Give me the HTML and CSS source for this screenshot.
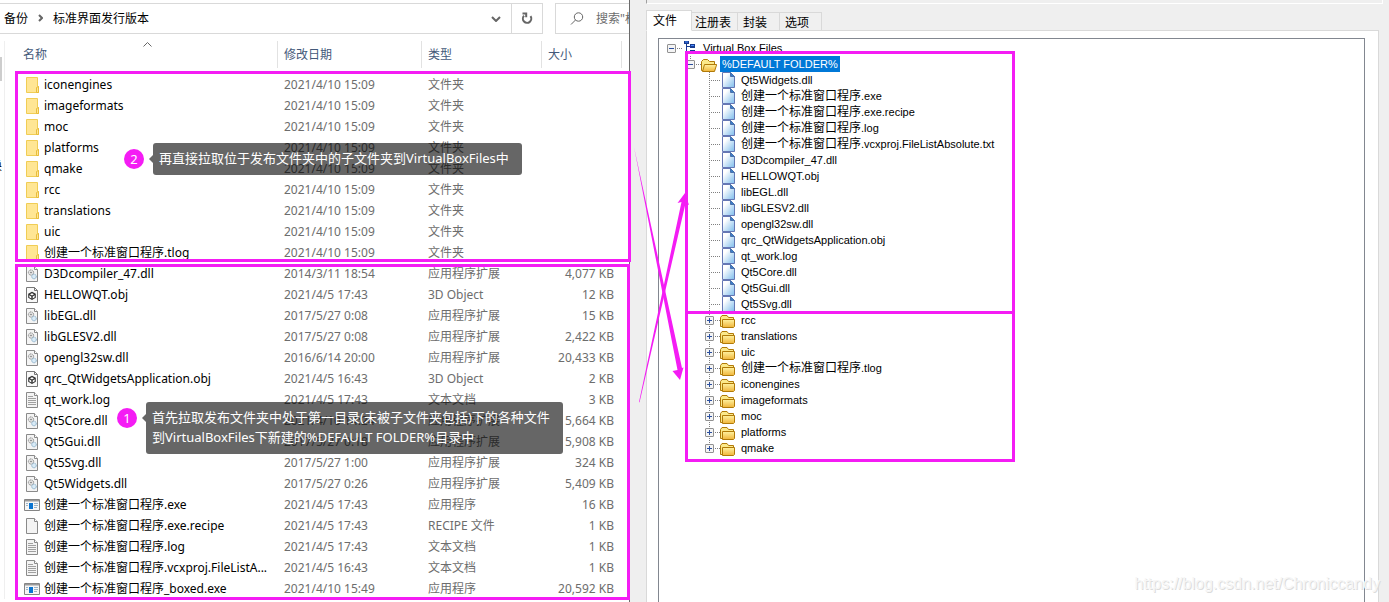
FILE: index.html
```
<!DOCTYPE html>
<html lang="zh-CN">
<head>
  <meta charset="UTF-8" />
  <meta name="viewport" content="width=device-width, initial-scale=1.0" />
  <title>标准界面发行版本</title>
  <link rel="stylesheet" href="styles.css">
</head>
<body>
  <svg class="sprite" aria-hidden="true">
    <symbol id="i-folder" viewBox="0 0 16 16">
      <path d="M2.500.5h11v9h1v6h-12z" fill="#ffe694" stroke="#f0cd55"/>
      <path d="M12.500 15.500v-5l2-1v6z" fill="#ffe694" stroke="#e8bd3c"/>
    </symbol>
    <symbol id="i-page" viewBox="0 0 16 16">
      <path d="M2.500.5h8l3 3v12h-11z" fill="#f4f4f4" stroke="#8a8a8a"/>
      <path d="M10.500.5v3h3" fill="#fff" stroke="#8a8a8a"/>
    </symbol>
    <symbol id="i-text" viewBox="0 0 16 16">
      <use href="#i-page"/>
      <path d="M4 4.500h5M4 6.500h8M4 8.500h8M4 10.500h8M4 12.500h8" stroke="#a0a0a0"/>
    </symbol>
    <symbol id="i-dll" viewBox="0 0 16 16">
      <use href="#i-page"/>
      <circle cx="7" cy="6.500" r="2.600" fill="#e4e4e4" stroke="#858585" stroke-dasharray="1.200 .6"/>
      <circle cx="7" cy="6.500" r=".8" fill="#777"/>
      <circle cx="10" cy="10.500" r="2.300" fill="#d9ebf7" stroke="#7ea6c2" stroke-dasharray="1.200 .6"/>
    </symbol>
    <symbol id="i-obj" viewBox="0 0 16 16">
      <path d="M2.500.5h8l3 3v12h-11z" fill="#f8f8f8" stroke="#777"/>
      <path d="M10.500.5v3h3" fill="none" stroke="#777"/>
      <path d="M8 4.700l3.800 2.100v4L8 13l-3.800-2.200v-4z" fill="#333"/>
      <path d="M8 6.200l2 1.100-2 1.100-2-1.100zM5.300 8.300l2 1.100v2l-2-1.100zM10.700 8.300l-2 1.100v2l2-1.100z" fill="#fff"/>
    </symbol>
    <symbol id="i-exe" viewBox="0 0 16 16">
      <path d="M.5 2.500h15v11H.5z" fill="#f6f6f6" stroke="#858585"/>
      <path d="M1 3h14v1.500H1z" fill="#9a9a9a"/>
      <path d="M5 6h4v6H5z" fill="#0a74d0"/>
      <path d="M2 6.500h2M2 8.500h2M10 6.500h4M10 8.500h4M10 10.500h3" stroke="#9db4c6"/>
    </symbol>
    <symbol id="t-file" viewBox="0 0 16 16">
      <path d="M2.500.5h8l4 4v11h-12z" fill="url(#blue)" stroke="#6577b4"/>
      <path d="M10.500.5v4h4z" fill="#3c7fc8" stroke="#4a70ac"/>
    </symbol>
    <symbol id="t-folder" viewBox="0 0 16 16">
      <path d="M.5 5.500l1.500-2h5l1.500 2h5v9H.5z" fill="#fbe98a" stroke="#b17a08"/>
      <path d="M2.500 7.500h12v7l-1 1h-11z" fill="url(#gold)" stroke="#b17a08"/>
    </symbol>
    <symbol id="t-open" viewBox="0 0 16 16">
      <path d="M.5 14.500v-9l2-2h4l2 2h5v9z" fill="#fbe98a" stroke="#b17a08"/>
      <path d="M3.500 8.500h12.200l-2.200 7H1.500z" fill="url(#gold)" stroke="#b17a08"/>
    </symbol>
    <symbol id="t-root" viewBox="0 0 16 16">
      <path d="M4.500 3v10.500h4M4.500 6.500h4" fill="none" stroke="#173b90"/>
      <path d="M2 1h5v3H2zM8 4h5v4H8zM8 10h5v4H8z" fill="#173b90"/>
      <path d="M3 2h3M9 5.500h3M9 11.500h3" stroke="#4b8cff"/>
    </symbol>
    <linearGradient id="blue" x2="1" y2="1"><stop offset=".25" stop-color="#fff"/><stop offset="1" stop-color="#7dbcec"/></linearGradient>
    <linearGradient id="gold" x2="0" y2="1"><stop offset="0" stop-color="#fff2a0"/><stop offset="1" stop-color="#f0b53a"/></linearGradient>
  </svg>

  <section class="explorer">
    <header class="toolbar">
      <div class="address">
        <nav class="crumbs">
          <a href="#">备份</a>
          <svg class="chevron" viewBox="0 0 5 8"><path d="M1 1l3 3-3 3"/></svg>
          <a href="#">标准界面发行版本</a>
        </nav>
        <button class="history" aria-label="历史记录"><svg width="10" height="6" viewBox="0 0 10 6"><path d="M1 1l4 4 4-4"/></svg></button>
        <button class="refresh" aria-label="刷新"><svg width="12" height="13" viewBox="0 0 12 13"><path d="M9.500 4.200A4.200 4.200 0 1 1 3 3.800M1.500 1.500h3.700v3.700"/></svg></button>
      </div>
      <label class="search">
        <svg width="14" height="14" viewBox="0 0 14 14"><circle cx="8.500" cy="5" r="4.200"/><path d="M5.500 8L1 12.500"/></svg>
        <input type="text" aria-label="搜索" placeholder="搜索&quot;标准界面发行版本&quot;">
      </label>
    </header>
    <div class="content">
      <aside class="sidebar"><span class="thumb"></span><span class="clipped">换</span></aside>
      <table class="files">
        <colgroup><col class="c-name"><col class="c-date"><col class="c-type"><col class="c-size"></colgroup>
        <thead>
          <tr><th>名称<svg class="sort" width="9" height="5" viewBox="0 0 9 5"><path d="M.5 4.500l4-4 4 4"/></svg></th><th>修改日期</th><th>类型</th><th>大小</th></tr>
        </thead>
        <tbody>
          <tr><td><svg><use href="#i-folder"/></svg>iconengines</td><td>2021/4/10 15:09</td><td>文件夹</td><td></td></tr>
          <tr><td><svg><use href="#i-folder"/></svg>imageformats</td><td>2021/4/10 15:09</td><td>文件夹</td><td></td></tr>
          <tr><td><svg><use href="#i-folder"/></svg>moc</td><td>2021/4/10 15:09</td><td>文件夹</td><td></td></tr>
          <tr><td><svg><use href="#i-folder"/></svg>platforms</td><td>2021/4/10 15:09</td><td>文件夹</td><td></td></tr>
          <tr><td><svg><use href="#i-folder"/></svg>qmake</td><td>2021/4/10 15:09</td><td>文件夹</td><td></td></tr>
          <tr><td><svg><use href="#i-folder"/></svg>rcc</td><td>2021/4/10 15:09</td><td>文件夹</td><td></td></tr>
          <tr><td><svg><use href="#i-folder"/></svg>translations</td><td>2021/4/10 15:09</td><td>文件夹</td><td></td></tr>
          <tr><td><svg><use href="#i-folder"/></svg>uic</td><td>2021/4/10 15:09</td><td>文件夹</td><td></td></tr>
          <tr><td><svg><use href="#i-folder"/></svg>创建一个标准窗口程序.tlog</td><td>2021/4/10 15:09</td><td>文件夹</td><td></td></tr>
          <tr><td><svg><use href="#i-dll"/></svg>D3Dcompiler_47.dll</td><td>2014/3/11 18:54</td><td>应用程序扩展</td><td>4,077 KB</td></tr>
          <tr><td><svg><use href="#i-obj"/></svg>HELLOWQT.obj</td><td>2021/4/5 17:43</td><td>3D Object</td><td>12 KB</td></tr>
          <tr><td><svg><use href="#i-dll"/></svg>libEGL.dll</td><td>2017/5/27 0:08</td><td>应用程序扩展</td><td>15 KB</td></tr>
          <tr><td><svg><use href="#i-dll"/></svg>libGLESV2.dll</td><td>2017/5/27 0:08</td><td>应用程序扩展</td><td>2,422 KB</td></tr>
          <tr><td><svg><use href="#i-dll"/></svg>opengl32sw.dll</td><td>2016/6/14 20:00</td><td>应用程序扩展</td><td>20,433 KB</td></tr>
          <tr><td><svg><use href="#i-obj"/></svg>qrc_QtWidgetsApplication.obj</td><td>2021/4/5 16:43</td><td>3D Object</td><td>2 KB</td></tr>
          <tr><td><svg><use href="#i-text"/></svg>qt_work.log</td><td>2021/4/5 17:43</td><td>文本文档</td><td>3 KB</td></tr>
          <tr><td><svg><use href="#i-dll"/></svg>Qt5Core.dll</td><td>2021/4/10 14:24</td><td>应用程序扩展</td><td>5,664 KB</td></tr>
          <tr><td><svg><use href="#i-dll"/></svg>Qt5Gui.dll</td><td>2017/5/27 0:18</td><td>应用程序扩展</td><td>5,908 KB</td></tr>
          <tr><td><svg><use href="#i-dll"/></svg>Qt5Svg.dll</td><td>2017/5/27 1:00</td><td>应用程序扩展</td><td>324 KB</td></tr>
          <tr><td><svg><use href="#i-dll"/></svg>Qt5Widgets.dll</td><td>2017/5/27 0:26</td><td>应用程序扩展</td><td>5,409 KB</td></tr>
          <tr><td><svg><use href="#i-exe"/></svg>创建一个标准窗口程序.exe</td><td>2021/4/5 17:43</td><td>应用程序</td><td>16 KB</td></tr>
          <tr><td><svg><use href="#i-page"/></svg>创建一个标准窗口程序.exe.recipe</td><td>2021/4/5 17:43</td><td>RECIPE 文件</td><td>1 KB</td></tr>
          <tr><td><svg><use href="#i-text"/></svg>创建一个标准窗口程序.log</td><td>2021/4/5 17:43</td><td>文本文档</td><td>1 KB</td></tr>
          <tr><td><svg><use href="#i-text"/></svg>创建一个标准窗口程序.vcxproj.FileListA...</td><td>2021/4/5 16:43</td><td>文本文档</td><td>1 KB</td></tr>
          <tr><td><svg><use href="#i-exe"/></svg>创建一个标准窗口程序_boxed.exe</td><td>2021/4/10 15:49</td><td>应用程序</td><td>20,592 KB</td></tr>
        </tbody>
      </table>
    </div>
  </section>

  <section class="boxer">
    <div class="group-end"></div>
    <div class="tabs" role="tablist">
      <button class="tab active" role="tab">文件</button>
      <button class="tab" role="tab">注册表</button>
      <button class="tab" role="tab">封装</button>
      <button class="tab" role="tab">选项</button>
    </div>
    <div class="pane">
      <div class="tree">
        <div class="row root"><span class="node"><button class="toggle open" aria-label="折叠"></button></span><svg><use href="#t-root"/></svg><span class="label">Virtual Box Files</span></div>
        <div class="row base"><span class="node end"><button class="toggle open" aria-label="折叠"></button></span><svg><use href="#t-open"/></svg><span class="label selected">%DEFAULT FOLDER%</span></div>
        <div class="row"><span class="node"></span><svg><use href="#t-file"/></svg><span class="label">Qt5Widgets.dll</span></div>
        <div class="row"><span class="node"></span><svg><use href="#t-file"/></svg><span class="label"><span class="han">创建一个标准窗口程序</span>.exe</span></div>
        <div class="row"><span class="node"></span><svg><use href="#t-file"/></svg><span class="label"><span class="han">创建一个标准窗口程序</span>.exe.recipe</span></div>
        <div class="row"><span class="node"></span><svg><use href="#t-file"/></svg><span class="label"><span class="han">创建一个标准窗口程序</span>.log</span></div>
        <div class="row"><span class="node"></span><svg><use href="#t-file"/></svg><span class="label"><span class="han">创建一个标准窗口程序</span>.vcxproj.FileListAbsolute.txt</span></div>
        <div class="row"><span class="node"></span><svg><use href="#t-file"/></svg><span class="label">D3Dcompiler_47.dll</span></div>
        <div class="row"><span class="node"></span><svg><use href="#t-file"/></svg><span class="label">HELLOWQT.obj</span></div>
        <div class="row"><span class="node"></span><svg><use href="#t-file"/></svg><span class="label">libEGL.dll</span></div>
        <div class="row"><span class="node"></span><svg><use href="#t-file"/></svg><span class="label">libGLESV2.dll</span></div>
        <div class="row"><span class="node"></span><svg><use href="#t-file"/></svg><span class="label">opengl32sw.dll</span></div>
        <div class="row"><span class="node"></span><svg><use href="#t-file"/></svg><span class="label">qrc_QtWidgetsApplication.obj</span></div>
        <div class="row"><span class="node"></span><svg><use href="#t-file"/></svg><span class="label">qt_work.log</span></div>
        <div class="row"><span class="node"></span><svg><use href="#t-file"/></svg><span class="label">Qt5Core.dll</span></div>
        <div class="row"><span class="node"></span><svg><use href="#t-file"/></svg><span class="label">Qt5Gui.dll</span></div>
        <div class="row"><span class="node"></span><svg><use href="#t-file"/></svg><span class="label">Qt5Svg.dll</span></div>
        <div class="row"><span class="node"><button class="toggle" aria-label="展开"></button></span><svg><use href="#t-folder"/></svg><span class="label">rcc</span></div>
        <div class="row"><span class="node"><button class="toggle" aria-label="展开"></button></span><svg><use href="#t-folder"/></svg><span class="label">translations</span></div>
        <div class="row"><span class="node"><button class="toggle" aria-label="展开"></button></span><svg><use href="#t-folder"/></svg><span class="label">uic</span></div>
        <div class="row"><span class="node"><button class="toggle" aria-label="展开"></button></span><svg><use href="#t-folder"/></svg><span class="label"><span class="han">创建一个标准窗口程序</span>.tlog</span></div>
        <div class="row"><span class="node"><button class="toggle" aria-label="展开"></button></span><svg><use href="#t-folder"/></svg><span class="label">iconengines</span></div>
        <div class="row"><span class="node"><button class="toggle" aria-label="展开"></button></span><svg><use href="#t-folder"/></svg><span class="label">imageformats</span></div>
        <div class="row"><span class="node"><button class="toggle" aria-label="展开"></button></span><svg><use href="#t-folder"/></svg><span class="label">moc</span></div>
        <div class="row"><span class="node"><button class="toggle" aria-label="展开"></button></span><svg><use href="#t-folder"/></svg><span class="label">platforms</span></div>
        <div class="row"><span class="node end"><button class="toggle" aria-label="展开"></button></span><svg><use href="#t-folder"/></svg><span class="label">qmake</span></div>
      </div>
    </div>
  </section>

  <!-- annotations drawn over both windows -->
  <div class="mark mark-folders"></div>
  <div class="mark mark-files"></div>
  <div class="mark mark-tree-files"></div>
  <div class="mark mark-tree-folders"></div>
  <svg class="arrows" width="60" height="270" viewBox="630 140 60 270">
    <path d="M634 147l48 221 1.500-.5-3.500 12.500-7.500-9 5-1z"/>
    <path d="M639 402l42.500-200-4 1 7.500-10 4 12-3.500-1.500-46 199z"/>
  </svg>
  <span class="badge badge-2">2</span>
  <div class="tip tip-2">再直接拉取位于发布文件夹中的子文件夹到VirtualBoxFiles中</div>
  <span class="badge badge-1">1</span>
  <div class="tip tip-1">首先拉取发布文件夹中处于第一目录(未被子文件夹包括)下的各种文件<br>到VirtualBoxFiles下新建的%DEFAULT FOLDER%目录中</div>
  <div class="watermark">https://blog.csdn.net/Chroniccandy</div>
</body>
</html>
```
FILE: styles.css
```
* {
  box-sizing: border-box;
}
body {
  margin: 0;
  display: flex;
  position: relative;
  height: 100vh;
  overflow: hidden;
  background: #efefef;
  font-family: "Noto Sans", "Noto Sans CJK SC", sans-serif;
  font-size: 12px;
  color: #000;
}
button {
  padding: 0;
  border: 0;
  background: none;
  font: inherit;
}
a {
  color: inherit;
  text-decoration: none;
}
.sprite {
  position: absolute;
  width: 0;
  height: 0;
}

/* file explorer */
.explorer {
  flex: 0 0 630px;
  background: #fff;
  border-right: 1px solid #6b6b6b;
  overflow: hidden;
}
.toolbar {
  display: flex;
  gap: 12px;
  padding-top: 3px;
}
.address {
  flex: 0 0 543px;
  display: flex;
  height: 31px;
  border: 1px solid #d9d9d9;
  border-left: 0;
}
.crumbs {
  flex: 1;
  display: flex;
  align-items: center;
  gap: 10px;
  padding: 0 0 2px 4px;
}
.chevron {
  width: 5px;
  height: 8px;
}
.toolbar svg {
  fill: none;
  stroke: #666;
}
.chevron,
.history svg,
.refresh svg {
  stroke-width: 2px;
}
.history,
.refresh {
  width: 30px;
  display: flex;
  align-items: center;
  justify-content: center;
}
.refresh {
  width: 31px;
  border-left: 1px solid #d9d9d9;
}
.search {
  flex: 1;
  min-width: 0;
  display: flex;
  align-items: center;
  gap: 12px;
  padding-left: 14px;
  border: 1px solid #d9d9d9;
  border-right: 0;
}
.search svg {
  flex: none;
}
.search input {
  flex: 1;
  min-width: 0;
  padding: 0;
  border: 0;
  outline: none;
  font: inherit;
}
.search input::placeholder {
  color: #6d6d6d;
}
.content {
  display: flex;
  padding-top: 7px;
}
.sidebar {
  width: 5px;
  border-right: 1px solid #efefef;
  padding-top: 16px;
}
.thumb {
  display: block;
  width: 2px;
  height: 24px;
  background: #cdcdcd;
}
.clipped {
  display: block;
  width: 2px;
  margin-top: 75px;
  overflow: hidden;
  direction: rtl;
}
.files {
  width: 617px;
  table-layout: fixed;
  border-collapse: separate;
  border-spacing: 0;
}
.c-name {
  width: 273px;
}
.c-date {
  width: 144px;
}
.c-type {
  width: 120px;
}
.c-size {
  width: 80px;
}
.files th {
  position: relative;
  height: 27px;
  padding: 0 6px 2px;
  border-right: 1px solid #e2e2e2;
  font-weight: normal;
  text-align: left;
  color: #44597a;
}
.files th:first-child {
  padding-left: 18px;
}
.sort {
  position: absolute;
  top: 1px;
  left: 138px;
  fill: none;
  stroke: #666;
}
.files tbody::before {
  content: "";
  display: block;
  height: 6px;
}
.files td {
  height: 21px;
  padding: 0 6px;
  line-height: 16px;
  white-space: nowrap;
  color: #6d6d6d;
}
.files td:first-child {
  padding: 0 0 0 19px;
  color: #000;
}
.files td:last-child {
  padding-right: 8px;
  text-align: right;
}
.files td svg {
  width: 16px;
  height: 16px;
  margin-right: 4px;
  vertical-align: top;
}

/* packer window */
.boxer {
  flex: 1;
  display: flex;
  flex-direction: column;
  padding: 0 10px 0 16px;
  font-family: "Liberation Sans", "Noto Sans CJK SC", sans-serif;
}
.group-end {
  height: 4px;
  margin-right: -4px;
  border-left: 1px solid #a0a0a0;
  border-right: 1px solid #fff;
  border-bottom: 1px solid #fff;
}
.tabs {
  display: flex;
  align-items: flex-end;
  height: 27px;
  padding-top: 6px;
  margin-bottom: -1px;
}
.tab {
  height: 19px;
  padding: 0 12px 0 5px;
  border: 1px solid #d9d9d9;
  border-left: 0;
  background: #f0f0f0;
}
.tab:nth-child(2) {
  padding: 0 6px 0 3px;
}
.tab.active {
  position: relative;
  height: 21px;
  padding: 0 14px 2px 6px;
  border-left: 1px solid #d9d9d9;
  border-bottom-color: #fff;
  background: #fff;
}
.pane {
  flex: 1;
  padding: 7px 13px 0 11px;
  border: 1px solid #d9d9d9;
  border-bottom: 0;
  background: #fff;
}
.tree {
  height: 100%;
  padding-top: 1px;
  border: 1px solid #828790;
  border-bottom: 0;
}
.row {
  display: flex;
  height: 16px;
  padding-left: 46px;
  line-height: 16px;
  font-size: 11px;
}
.row.root {
  padding-left: 8px;
}
.row.base {
  padding-left: 27px;
}
.row svg {
  width: 16px;
  height: 16px;
  margin-right: 3px;
}
.node {
  width: 15px;
  padding-top: 4px;
  background:
    repeating-linear-gradient(#808080 0 1px, transparent 1px 2px) 4px 0 / 1px 100% no-repeat,
    repeating-linear-gradient(90deg, #808080 0 1px, transparent 1px 2px) 4px 8px / 11px 1px no-repeat;
}
.node.end {
  background-size: 1px 8px, 11px 1px;
}
.root .node {
  background-size: 0 0, 11px 1px;
}
.toggle {
  display: block;
  width: 9px;
  height: 9px;
  border: 1px solid #919191;
  border-radius: 1px;
  background:
    linear-gradient(#2b4f9e, #2b4f9e) center / 5px 1px no-repeat,
    linear-gradient(#2b4f9e, #2b4f9e) center / 1px 5px no-repeat,
    #f4f4f4;
}
.toggle.open {
  background:
    linear-gradient(#2b4f9e, #2b4f9e) center / 5px 1px no-repeat,
    #f4f4f4;
}
.label {
  padding: 0 2px;
  white-space: nowrap;
}
.label.selected {
  background: #0078d7;
  color: #fff;
}
.han {
  font-size: 12px;
}

/* annotations */
.mark {
  position: absolute;
  border: 3px solid #f41cf4;
}
.mark-folders {
  left: 15px;
  top: 71px;
  width: 616px;
  height: 191px;
}
.mark-files {
  left: 15px;
  top: 264px;
  width: 615px;
  height: 336px;
}
.mark-tree-files {
  left: 685px;
  top: 51px;
  width: 330px;
  height: 263px;
}
.mark-tree-folders {
  left: 685px;
  top: 311px;
  width: 330px;
  height: 151px;
}
.arrows {
  position: absolute;
  left: 630px;
  top: 140px;
  fill: #f41cf4;
}
.badge {
  position: absolute;
  width: 20px;
  height: 20px;
  border-radius: 50%;
  background: #f41cf4;
  color: #fff;
  font-size: 13px;
  line-height: 20px;
  text-align: center;
}
.badge-2 {
  left: 124px;
  top: 149px;
}
.badge-1 {
  left: 117px;
  top: 408px;
}
.tip {
  position: absolute;
  padding: 5px 6px 7px;
  border-radius: 3px;
  background: rgba(0, 0, 0, 0.6);
  color: #fff;
  font-size: 13px;
  line-height: 20px;
  white-space: nowrap;
}
.tip::before {
  content: "";
  position: absolute;
  left: -4px;
  top: 12px;
  border: 4px solid transparent;
  border-left: 0;
  border-right-color: rgba(0, 0, 0, 0.6);
}
.tip-2 {
  left: 153px;
  top: 143px;
  width: 369px;
}
.tip-1 {
  left: 146px;
  top: 402px;
  width: 417px;
}
.watermark {
  position: absolute;
  right: 9px;
  bottom: 9px;
  font-family: "Liberation Sans", sans-serif;
  font-size: 16px;
  color: #f6f6f6;
  text-shadow: 1px 1px 0 #dcdcdc;
}
```
